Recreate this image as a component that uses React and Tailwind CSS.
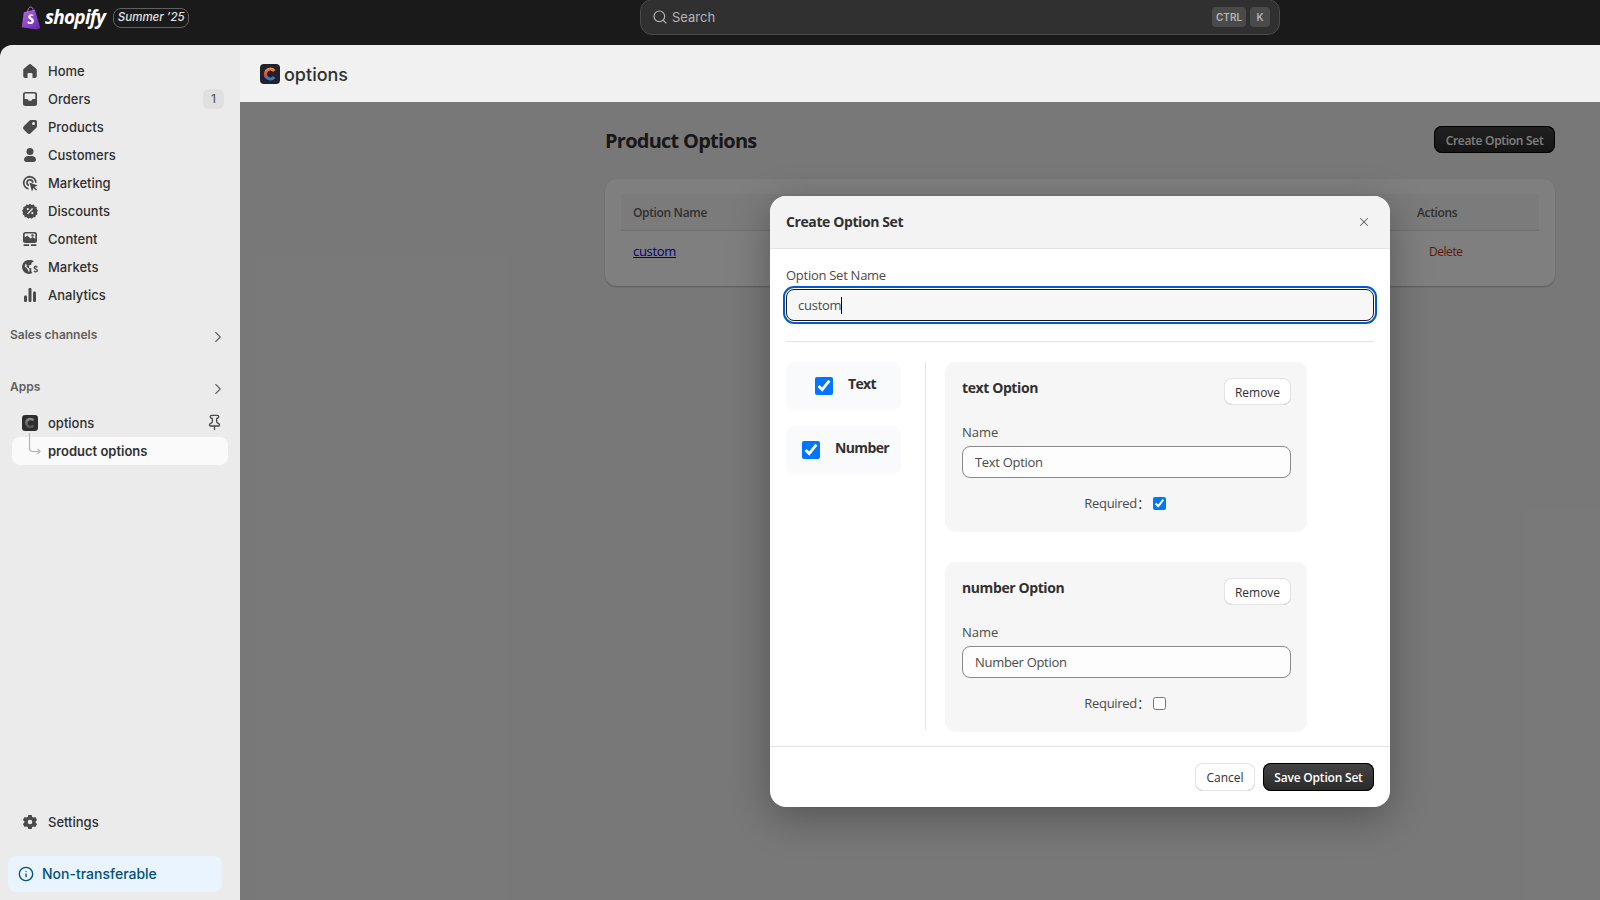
import React from "react";
import { ChevronRight, Search, X, Info, Pin } from "lucide-react";

const I = ({ children }) => (
  <svg viewBox="0 0 20 20" className="w-5 h-5 shrink-0 text-[#4a4a4a]" fill="currentColor">{children}</svg>
);

const icons = {
  Home: <I><path d="M9.2 3.300a1.250 1.250 0 0 1 1.600 0l5.400 4.500c.35.3.55.7.55 1.150v6.300A1.750 1.750 0 0 1 15 17h-2.500v-3.750a1.250 1.250 0 0 0-1.250-1.250h-2.500a1.250 1.250 0 0 0-1.250 1.250V17H5a1.750 1.750 0 0 1-1.750-1.750v-6.300c0-.45.2-.85.55-1.150z" /></I>,
  Orders: <I><path fillRule="evenodd" d="M5.500 3A2.500 2.500 0 0 0 3 5.500v9A2.500 2.500 0 0 0 5.500 17h9a2.500 2.500 0 0 0 2.500-2.500v-9A2.500 2.500 0 0 0 14.500 3zM5.600 4.600h8.800c.5 0 .9.4.9.9v4.600h-2.200c-.7 0-1.200.4-1.400 1l-.2.6H8.500l-.2-.6c-.2-.6-.7-1-1.400-1H4.700V5.500c0-.5.4-.9.9-.9z" /></I>,
  Products: <I><path fillRule="evenodd" d="M11 3h4.250A1.750 1.750 0 0 1 17 4.750V9c0 .6-.25 1.200-.7 1.650l-5.600 5.600a2.300 2.300 0 0 1-3.250 0l-3.700-3.700a2.300 2.300 0 0 1 0-3.250l5.600-5.600C9.800 3.250 10.400 3 11 3m2.500 5a1.500 1.500 0 1 0 0-3 1.500 1.500 0 0 0 0 3" /></I>,
  Customers: <I><circle cx="10" cy="6.500" r="3.500" /><path d="M4 14.600c0-2 1.900-3.600 4.200-3.600h3.600c2.300 0 4.200 1.600 4.200 3.600 0 1.300-1 2.400-2.300 2.400H6.300C5 17 4 15.900 4 14.600" /></I>,
  Marketing: <I><path d="M8.400 15.800A6.100 6.100 0 1 1 15.900 9.700" fill="none" stroke="currentColor" strokeWidth="1.800" /><path d="M8.900 12.400A2.900 2.900 0 1 1 12.800 9.800" fill="none" stroke="currentColor" strokeWidth="1.700" /><path d="M9.400 9.400l8.400 3.200-3.300 1.500 2.500 2.500-1 1-2.500-2.500-1.500 3.300z" /></I>,
  Discounts: <I><path fillRule="evenodd" d="M10 2.800l1.700 1.100 2-.3 1.100 1.800 1.900.6-.1 2 1.400 1.500-1 1.700.5 2-1.700 1.100-.5 2-2 0-1.500 1.400-1.800-.9-1.800.9-1.500-1.400-2 0-.5-2-1.700-1.100.5-2-1-1.700 1.400-1.500-.1-2 1.900-.6 1.100-1.800 2 .3zM12.100 7l-5 5.400 1 .9 5-5.400zM7.800 9.200a1.100 1.100 0 1 0 0-2.200 1.100 1.100 0 0 0 0 2.200m4.500 4a1.100 1.100 0 1 0 0-2.200 1.100 1.100 0 0 0 0 2.200" /></I>,
  Content: <I><path fillRule="evenodd" d="M5.500 3h9A2.500 2.500 0 0 1 17 5.500v6a2.500 2.500 0 0 1-2.500 2.500h-9A2.500 2.500 0 0 1 3 11.500v-6A2.500 2.500 0 0 1 5.500 3M5.700 4.600a1 1 0 0 0-1 1v2.800l2.500-1.800 3.300 3 2.200-1.500 2.600 1.800V5.600a1 1 0 0 0-1-1zM12.500 7.800a1.300 1.300 0 1 0 0-2.600 1.300 1.300 0 0 0 0 2.600" /><rect x="3.500" y="15.300" width="5.700" height="1.600" rx=".6" /><rect x="10.800" y="15.300" width="5.700" height="1.600" rx=".6" /></I>,
  Markets: <I><path fillRule="evenodd" d="M10 3c1.500 0 2.900.5 4 1.300l-2.300 1.400-.7 2.200-2.400.7.7 2.400 2 .3.100 3.400 1 1.400A7 7 0 1 1 10 3M5.500 6.700L4.700 9.500l2.600 2.200 1.400 3.100.9-.6-.2-2.400-2.800-1.800.1-2.300z" /><path fill="none" stroke="currentColor" strokeWidth="1.300" d="M17.300 10.300c-.4-.6-1-.8-1.600-.8-.9 0-1.500.5-1.500 1.200 0 1.700 3.200 1 3.200 2.800 0 .8-.7 1.300-1.700 1.300-.7 0-1.300-.3-1.700-.8M15.800 8.500v1m0 5.100v1" /></I>,
  Analytics: <I><rect x="4" y="10.500" width="3" height="6.500" rx="1.200" /><rect x="8.500" y="3" width="3" height="14" rx="1.200" /><rect x="13" y="6.500" width="3" height="10.500" rx="1.200" /></I>,
  Settings: <I><path fillRule="evenodd" d="M8.300 3h3.400l.5 1.900 1.300.7 1.900-.6 1.700 2.900-1.400 1.400v1.400l1.400 1.400-1.700 2.900-1.900-.6-1.300.7-.5 1.900H8.300l-.5-1.900-1.300-.7-1.900.6-1.700-2.900 1.400-1.400V9.300L2.900 7.900 4.600 5l1.900.6 1.300-.7zM10 12.300a2.300 2.300 0 1 0 0-4.600 2.300 2.300 0 0 0 0 4.600" /></I>,
};

const nav = ["Home", "Orders", "Products", "Customers", "Marketing", "Discounts", "Content", "Markets", "Analytics"];

const AppLogo = ({ mono, size }) => (
  <svg viewBox="0 0 20 20" className={size}>
    <defs>
      <linearGradient id={mono ? "cm" : "cc"} x1="0.5" y1="0" x2="0.5" y2="1">
        <stop offset="0" stopColor={mono ? "#8a8a8a" : "#f08a2a"} />
        <stop offset=".5" stopColor={mono ? "#6e6e6e" : "#e0483f"} />
        <stop offset="1" stopColor={mono ? "#555" : "#2a7fc0"} />
      </linearGradient>
    </defs>
    <rect width="20" height="20" rx="4" fill={mono ? "#2e2e2e" : "#20202e"} />
    <path d="M14.300 6.900A5 5 0 1 0 14.300 13.100" fill="none" stroke={`url(#${mono ? "cm" : "cc"})`} strokeWidth="3.200" />
  </svg>
);

const Remove = () => (
  <button className="h-[27px] w-[67px] rounded-lg bg-white pt-[2px] text-[12px] text-[#303030] shadow-[inset_0_0_0_1px_#e3e3e3,inset_0_-1px_0_#b5b5b5]">Remove</button>
);

const OptionCard = ({ title, value, checked }) => (
  <div className="h-[169px] rounded-[10px] bg-[#f6f6f6] pt-4 pr-4 pb-4 pl-[17px] shadow-[0_1px_1px_rgba(0,0,0,0.03)]">
    <div className="flex items-start justify-between">
      <div className="text-[14px] leading-5 font-bold tracking-[-0.4px] text-[#303030]">{title}</div>
      <Remove />
    </div>
    <div className="mt-[17px] text-[13px] leading-5 text-[#4a4a4a]">Name</div>
    <input readOnly value={value} className="mt-1 h-8 w-full rounded-lg border border-[#8a8a8a] bg-[#fdfdfd] pl-[12px] text-[13px] tracking-[-0.3px] text-[#4a4a4a] outline-none" />
    <div className="mt-4 flex h-5 items-center justify-center pr-[3px] text-[13px] tracking-[-0.3px] text-[#4a4a4a]">
      <span className="font-['Open_Sans','Noto_Sans_CJK_SC',sans-serif]">Required：</span>
      <input type="checkbox" readOnly checked={checked} className="m-0 ml-[3px] -mt-px h-[13px] w-[13px]" />
    </div>
  </div>
);

const Tile = ({ label }) => (
  <div className="flex h-12 items-center justify-center gap-[15px] rounded-lg bg-[#f9fafb] pl-1">
    <input type="checkbox" readOnly checked className="h-[18px] w-[18px]" />
    <span className="-mt-[6px] text-[14px] font-bold tracking-[-0.6px] text-[#303030]">{label}</span>
  </div>
);

export default function App() {
  return (
    <div className="flex h-[900px] w-full flex-col overflow-hidden bg-[#1a1a1a] font-[Inter,sans-serif]">
      <header className="flex h-[45px] shrink-0 items-start">
        <div className="flex h-9 w-[640px] items-center pl-[21px]">
          <svg viewBox="0 0 20 24" className="h-[24px] w-[20px]">
            <defs>
              <linearGradient id="bag" x1="0" y1="0" x2="1" y2="1">
                <stop offset="0" stopColor="#b868ea" />
                <stop offset="1" stopColor="#5f25a8" />
              </linearGradient>
            </defs>
            <path d="M2.800 6.300L13.800 3.500 19.300 22 15.500 23.600 0.800 21.300z" fill="url(#bag)" />
            <path d="M6.500 6.500c0-3 1.600-5.500 3.300-5.500 1.500 0 2.400 1.700 2.400 4" fill="none" stroke="#b57ae8" strokeWidth="1" />
            <path d="M12.300 8.800c-.6-.3-1.400-.5-2.100-.5-1.800 0-3 1.200-3 2.700 0 2.300 3.300 2.600 3.300 4 0 .6-.5 1-1.200 1-.8 0-1.700-.4-2.300-.9l-.6 2c.7.6 1.800 1 2.900 1 2.100 0 3.600-1.300 3.600-3.400 0-2.600-3.300-3-3.300-4.200 0-.5.4-.8 1-.8.5 0 1 .1 1.500.3z" fill="#fff" />
          </svg>
          <span className="-mt-[2px] ml-[4px] font-['Open_Sans',sans-serif] text-[19px] leading-none font-bold tracking-[-0.75px] text-white italic">shopify</span>
          <span className="ml-[8px] flex h-[20px] w-[76px] items-center justify-center rounded-lg border border-[#616161] text-[11.5px] font-medium text-[#e3e3e3] italic">Summer ’25</span>
        </div>
        <div className="-mt-px flex h-[36px] w-[640px] items-center rounded-xl border border-[#4a4a4a] bg-[#303030] pr-[9px] pl-[11px]">
          <Search size={16} strokeWidth={1.75} className="text-[#b5b5b5]" />
          <span className="ml-[4px] pt-[2px] text-[13px] text-[#b5b5b5]">Search</span>
          <span className="ml-auto flex h-5 w-[34px] items-center justify-center rounded bg-[#4a4a4a] text-[10px] font-semibold text-[#b5b5b5]">CTRL</span>
          <span className="ml-1 flex h-5 w-5 items-center justify-center rounded bg-[#4a4a4a] text-[10px] font-semibold text-[#b5b5b5]">K</span>
        </div>
      </header>

      <div className="flex min-h-0 flex-1">
        <aside className="flex w-[240px] shrink-0 flex-col rounded-tl-xl bg-[#ebebeb] pt-3 pb-2 text-[13px] font-medium text-[#303030]">
          {nav.map((n) => (
            <div key={n} className="flex h-7 items-center gap-2 pr-[16px] pl-[20px]">
              {icons[n]}
              <span className="pt-[2px]">{n}</span>
              {n === "Orders" && (
                <span className="ml-auto flex h-5 w-[21px] items-center justify-center rounded-md bg-[#e0e0e0] text-[12px] text-[#616161]">1</span>
              )}
            </div>
          ))}
          <div className="mt-3 flex h-7 items-center justify-between pr-[13px] pl-[10px] text-[12px] font-semibold text-[#616161]">
            <span>Sales channels</span>
            <ChevronRight size={18} strokeWidth={1.5} className="mt-1 text-[#616161]" />
          </div>
          <div className="mt-6 flex h-7 items-center justify-between pr-[13px] pl-[10px] text-[12px] font-semibold text-[#616161]">
            <span>Apps</span>
            <ChevronRight size={18} strokeWidth={1.5} className="mt-1 text-[#616161]" />
          </div>
          <div className="mt-2 flex h-7 items-center pr-[17px] pl-[22px]">
            <AppLogo mono size="h-4 w-4" />
            <span className="ml-[10px] pt-[2px]">options</span>
            <Pin size={17} strokeWidth={1.9} className="-mt-px ml-auto text-[#4a4a4a]" />
          </div>
          <div className="relative mx-3 flex h-7 w-[216px] items-center rounded-lg bg-[#fafafa] pt-[2px] pl-9 font-semibold text-[#303030]">
            product options
            <svg viewBox="0 0 16 24" className="absolute top-[-4px] left-[16px] h-6 w-4" fill="none" stroke="#b5b5b5" strokeWidth="1.200">
              <path d="M1.500 0V14.500Q1.500 18.500 5 18.500H12M9.500 16L12 18.500 9.500 21" />
            </svg>
          </div>
          <div className="mt-auto flex h-7 items-center gap-2 pl-[20px]">
            {icons.Settings}
            <span className="pt-[2px]">Settings</span>
          </div>
          <div className="mt-5 ml-2 flex h-9 w-[214px] items-center rounded-lg bg-[#eaf4ff] pl-[10px] text-[14px] text-[#00527c]">
            <Info size={16} strokeWidth={2} />
            <span className="-mt-px ml-2">Non-transferable</span>
          </div>
        </aside>

        <main className="flex min-w-0 flex-1 flex-col">
          <div className="flex h-[57px] shrink-0 items-center bg-[#f1f1f1] pl-5 text-[18px] font-medium text-[#303030]">
            <AppLogo size="h-5 w-5" />
            <span className="ml-1 pt-[2px]">options</span>
          </div>
          <div className="relative flex-1 bg-[#f1f1f1] pt-6 pr-[45px] pl-[365px] font-['Open_Sans',sans-serif]">
            <div className="flex h-[27px] items-center justify-between">
              <h1 className="pt-[2px] text-[20px] font-bold tracking-[-0.75px] text-[#303030]">Product Options</h1>
              <button className="h-[27px] w-[121px] rounded-lg bg-[linear-gradient(#444444,#2a2a2a)] pt-[2px] text-[12px] font-semibold tracking-[-0.3px] text-white shadow-[inset_0_0_0_1px_#000]">Create Option Set</button>
            </div>
            <div className="mt-[26px] h-[107px] rounded-xl bg-white px-4 pt-[15px] shadow-[0_1px_2px_rgba(0,0,0,0.25)]">
              <div className="flex h-[37px] items-center justify-between border-b border-[#e3e3e3] bg-[#f7f7f7] pt-px pl-3 text-[12px] font-semibold tracking-[-0.35px] text-[#616161]">
                <span>Option Name</span>
                <span className="w-[122px]">Actions</span>
              </div>
              <div className="flex h-[40px] items-center justify-between pt-px pl-3 text-[13px]">
                <a className="tracking-[-0.3px] text-[#0000ee] underline">custom</a>
                <span className="w-[110px] text-[12px] font-medium tracking-[-0.45px] text-[#c42c12]">Delete</span>
              </div>
            </div>

            <div className="absolute inset-0 bg-black/50" />

            <div className="absolute top-[94px] left-[530px] flex h-[611px] w-[620px] flex-col overflow-hidden rounded-2xl bg-white text-[13px] text-[#4a4a4a] shadow-[0_10px_40px_rgba(0,0,0,0.3)]">
              <div className="flex h-[53px] shrink-0 items-center justify-between border-b border-[#e3e3e3] bg-[#f3f3f3] pr-[19px] pl-4">
                <span className="-mt-[2px] text-[14px] font-bold tracking-[-0.4px] text-[#303030]">Create Option Set</span>
                <X size={14} strokeWidth={1.75} className="text-[#616161]" />
              </div>
              <div className="flex-1 px-4 pt-4">
                <div className="leading-5 tracking-[-0.27px]">Option Set Name</div>
                <div className="mt-1 flex h-8 items-center rounded-lg border border-[#1a1a1a] bg-[#f7f7f7] pt-[2px] pl-[11px] tracking-[-0.25px] outline-2 outline-offset-1 outline-[#005bd3]">
                  custom<span className="-mt-[2px] h-[17px] w-px bg-black" />
                </div>
                <div className="mt-5 h-px bg-[#e3e3e3]" />
                <div className="mt-5 flex">
                  <div className="flex w-[115px] shrink-0 flex-col gap-4">
                    <Tile label="Text" />
                    <Tile label="Number" />
                  </div>
                  <div className="mr-[19px] ml-6 h-[368px] w-px bg-[#e3e3e3]" />
                  <div className="flex w-[362px] flex-col gap-[31px]">
                    <OptionCard title="text Option" value="Text Option" checked />
                    <OptionCard title="number Option" value="Number Option" checked={false} />
                  </div>
                </div>
              </div>
              <div className="flex h-[61px] shrink-0 items-center justify-end gap-2 border-t border-[#e3e3e3] pr-4">
                <button className="h-7 w-[60px] rounded-lg bg-white pt-px text-[12px] text-[#303030] shadow-[inset_0_0_0_1px_#e3e3e3,inset_0_-1px_0_#b5b5b5]">Cancel</button>
                <button className="h-7 w-[111px] rounded-lg bg-[linear-gradient(#444444,#2a2a2a)] pt-px text-[12px] font-semibold tracking-[-0.2px] text-white shadow-[inset_0_0_0_1px_#000]">Save Option Set</button>
              </div>
            </div>
          </div>
        </main>
      </div>
    </div>
  );
}
